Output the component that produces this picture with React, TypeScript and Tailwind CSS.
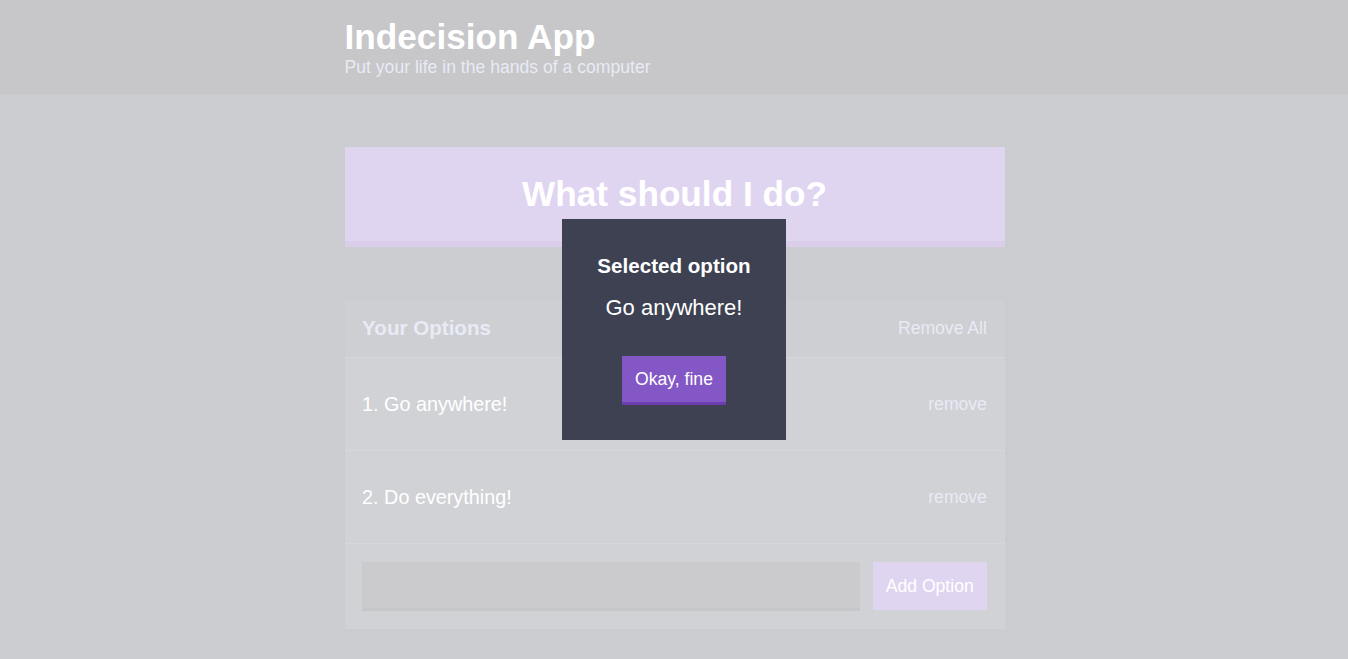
import React, { useState } from 'react';

const options = ['Go anywhere!', 'Do everything!'];

const App = () => {
  const [selected, setSelected] = useState<string | undefined>('Go anywhere!');

  return (
    <div className="min-h-screen bg-[#333745] font-['Liberation_Sans',Arial,sans-serif]">
      {/* Header */}
      <header className="bg-[#20222b] pt-[17px] pb-[17px] pl-px">
        <div className="w-[660px] mx-auto">
          <h1 className="text-[35.2px] leading-[40px] font-bold text-white m-0">Indecision App</h1>
          <h2 className="text-[17.6px] leading-[20px] font-medium text-[#a5afd7] m-0">
            Put your life in the hands of a computer
          </h2>
        </div>
      </header>

      <div className="pl-px">
        <div className="w-[660px] mx-auto pt-[53px] pb-[40px]">
          <button className="block w-full bg-[#8357c5] border-b-[6.6px] border-[#6b3db0] text-white font-bold text-[35.2px] leading-[41px] p-[26.4px] mb-[53px]">
            What should I do?
          </button>

          {/* Widget */}
          <div className="bg-[#464b5e]">
            <div className="flex items-center justify-between h-[58px] px-[17.6px] bg-[#3c4251] border-b border-[#5a607a]">
              <h3 className="text-[20.6px] font-bold text-[#a5afd7] m-0">Your Options</h3>
              <button className="text-[17.6px] text-[#a5afd7]">Remove All</button>
            </div>

            {options.map((option, i) => (
              <div
                key={option}
                className="flex items-center justify-between px-[17.6px] py-[35px] border-b border-[#5a607a]"
              >
                <p className="text-[19.8px] leading-[22px] font-medium text-white m-0">
                  {i + 1}. {option}
                </p>
                <button className="text-[17.6px] leading-[20px] text-[#a5afd7]">remove</button>
              </div>
            ))}

            <form className="flex items-start px-[17.6px] py-[18px]" onSubmit={e => e.preventDefault()}>
              <input
                type="text"
                className="flex-1 h-[49px] mr-[13px] bg-[#30333f] border-b-[3px] border-[#20222b] text-[#a5afd7] p-[13.2px] outline-none"
              />
              <button className="h-[48px] px-[13.2px] bg-[#8357c5] text-white text-[17.6px] font-medium">
                Add Option
              </button>
            </form>
          </div>
        </div>
      </div>

      {/* Modal */}
      {selected && (
        <div className="fixed inset-0 bg-white/75 flex items-center justify-center">
          <div className="bg-[#3d4152] text-white text-center p-[35.2px] max-w-[330px]">
            <h3 className="text-[20.6px] leading-[23.7px] font-bold m-0 mb-[17.6px]">Selected option</h3>
            <p className="text-[22px] leading-[25.3px] font-light m-0 mb-[35.2px]">{selected}</p>
            <button
              onClick={() => setSelected(undefined)}
              className="bg-[#8357c5] border-b-[3.3px] border-[#6b3db0] text-white text-[17.6px] leading-[20.2px] font-medium p-[13.2px]"
            >
              Okay, fine
            </button>
          </div>
        </div>
      )}
    </div>
  );
};

export default App;
